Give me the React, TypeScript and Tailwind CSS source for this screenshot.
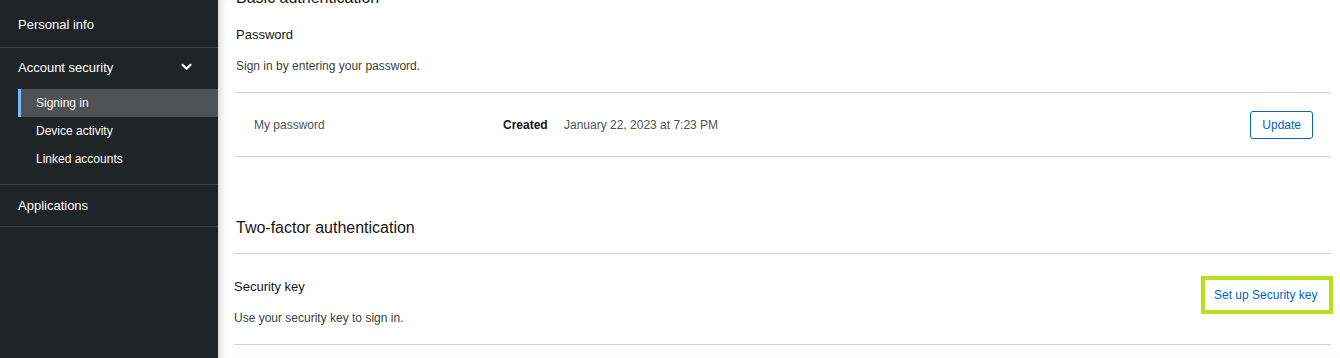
import React from "react";

const font = { fontFamily: '"Liberation Sans", Arial, sans-serif' };

export default function App() {
  return (
    <div className="flex w-[1340px] h-[358px] overflow-hidden bg-white" style={font}>
      {/* Sidebar */}
      <nav className="w-[218px] shrink-0 bg-[#212427] text-white flex flex-col">
        <div className="pt-[15px] pb-[12px] pl-[18px] text-[13px] leading-[20px] border-b border-[#3c3f42]">
          Personal info
        </div>
        <div className="border-b border-[#3c3f42] pb-[11px]">
          <div className="flex items-center justify-between pl-[18px] pr-[26px] pt-[10px] pb-[11px] text-[13px] leading-[20px]">
            <span>Account security</span>
            <svg width="11" height="8" viewBox="0 0 11 8" className="mt-[-2px]">
              <path d="M1.5 1.8 L5.5 5.8 L9.5 1.8" stroke="#fff" strokeWidth="2.2" fill="none" strokeLinecap="round" strokeLinejoin="round" />
            </svg>
          </div>
          <div className="ml-[18px] flex flex-col text-[12px]">
            <div className="h-[28px] flex items-center pl-[15px] bg-[#4f5255] border-l-[3px] border-[#73bcf7]">Signing in</div>
            <div className="h-[28px] flex items-center pl-[18px]">Device activity</div>
            <div className="h-[28px] flex items-center pl-[18px]">Linked accounts</div>
          </div>
        </div>
        <div className="h-[42px] flex items-center pl-[18px] text-[13px] border-b border-[#3c3f42]">
          Applications
        </div>
      </nav>

      {/* Main */}
      <main className="flex-1 relative shadow-[inset_9px_0_9px_-7px_rgba(0,0,0,0.18)]">
        <div className="pl-[18px] pr-[9px] mt-[-14px]">
          <h2 className="text-[16px] leading-[24px] text-[#151515]">Basic authentication</h2>
          <div className="mt-[15px] text-[13px] leading-[20px] text-[#151515]">Password</div>
          <div className="mt-[12px] text-[12px] leading-[18px] text-[#3c3f42]">Sign in by entering your password.</div>
          <div className="mt-[17px] border-t border-b border-[#d2d2d2] h-[65px] flex items-center text-[12px]">
            <span className="ml-[18px] w-[249px] text-[#4f5255]">My password</span>
            <span className="font-bold text-[#151515] w-[61px]">Created</span>
            <span className="text-[#4f5255]">January 22, 2023 at 7:23 PM</span>
            <button className="ml-auto mr-[18px] h-[28px] px-[11px] rounded-[3px] border border-[#0066cc] text-[#0066cc] text-[12px]">
              Update
            </button>
          </div>
          <h2 className="mt-[59px] text-[16px] leading-[24px] text-[#151515]">Two-factor authentication</h2>
        </div>
        <div className="pl-[16px] pr-[9px]">
          <div className="mt-[13px] border-t border-[#d2d2d2]" />
          <div className="flex items-start justify-between border-b border-[#d2d2d2] pb-[17px]">
            <div>
              <div className="mt-[23px] text-[13px] leading-[20px] text-[#151515]">Security key</div>
              <div className="mt-[12px] text-[12px] leading-[18px] text-[#3c3f42]">Use your security key to sign in.</div>
            </div>
            <div className="mt-[22px] mr-[-2px] w-[132px] h-[38px] border-[4px] border-[#b6e01b] flex items-center pl-[9px] text-[12px] text-[#0066cc]">
              Set up Security key
            </div>
          </div>
        </div>
      </main>
    </div>
  );
}
